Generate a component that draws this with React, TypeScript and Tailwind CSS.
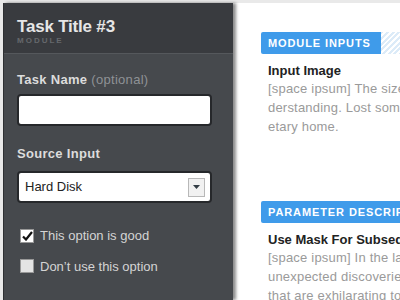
export default function App() {
  return (
    <div className="w-[400px] h-[300px] overflow-hidden bg-[#e9e9e9] pt-[3px] pl-[3px] flex font-['Liberation_Sans',Arial,sans-serif]">
      <div className="w-[230px] h-[297px] shrink-0 flex flex-col bg-[#46494d] border-l border-[#2e3033] shadow-[3px_0_3px_rgba(0,0,0,0.45)] z-10">
        <div className="h-[51px] bg-[#393b3f] border-b border-[#55585c] pl-[13px] pt-[14px]">
          <div className="text-[17px] leading-[20px] font-bold text-[#e6e6e6] tracking-[-0.2px]">Task Title #3</div>
          <div className="text-[8px] leading-[8px] font-bold tracking-[2px] text-[#65686c]">MODULE</div>
        </div>
        <div className="pl-[13px] pr-[21px] pt-[18px] flex flex-col">
          <div className="text-[13px] leading-[16px] font-bold text-[#dcdcdc] tracking-[0.3px]">
            Task Name <span className="font-normal text-[#8f9296]">(optional)</span>
          </div>
          <div className="mt-[6px] h-[32px] bg-white rounded-[4px] border-2 border-[#26282b]" />
          <div className="mt-[20px] text-[13px] leading-[16px] font-bold text-[#dcdcdc] tracking-[0.3px]">Source Input</div>
          <div className="mt-[9px] h-[32px] bg-white rounded-[4px] border-2 border-[#26282b] flex items-center justify-between pl-[6px] pr-[5px]">
            <span className="text-[13px] text-[#222]">Hard Disk</span>
            <div className="w-[17px] h-[19px] border border-[#b8b8b8] bg-[#f1f1f1] flex items-center justify-center">
              <svg width="7" height="4" viewBox="0 0 7 4">
                <path d="M0 0h7L3.5 4z" fill="#333d45" />
              </svg>
            </div>
          </div>
          <label className="mt-[23px] flex items-center gap-[6px] text-[13px] text-[#d4d4d4]">
            <span className="w-[14px] h-[14px] ml-[3px] bg-white border border-[#999] flex items-center justify-center">
              <svg width="11" height="10" viewBox="0 0 11 10">
                <path d="M1 5.5l3 3L10 1" stroke="#111" strokeWidth="2.2" fill="none" />
              </svg>
            </span>
            This option is good
          </label>
          <label className="mt-[11px] flex items-center gap-[6px] text-[13px] text-[#d4d4d4]">
            <span className="w-[14px] h-[14px] ml-[3px] bg-[#e4e4e4] border border-[#999]" />
            Don’t use this option
          </label>
        </div>
      </div>
      <div className="flex-1 bg-white pl-[28px] pt-[29px] overflow-hidden">
        <div className="flex h-[22px] w-[200px]">
          <div className="bg-[#3f9bea] rounded-l-[2px] pl-[7px] pr-[10px] flex items-center text-[11px] font-bold text-white tracking-[0.9px] whitespace-nowrap">MODULE INPUTS</div>
          <div className="flex-1 bg-[repeating-linear-gradient(135deg,#dcebf8_0px,#dcebf8_2px,#ffffff_2px,#ffffff_4px)]" />
        </div>
        <div className="pl-[7px] w-[300px]">
          <div className="mt-[9px] text-[13px] leading-[16px] font-bold text-[#222]">Input Image</div>
          <div className="text-[13px] leading-[19px] text-[#9a9a9a] tracking-[0.2px]">
            [space ipsum] The size<br />derstanding. Lost some<br />etary home.
          </div>
        </div>
        <div className="mt-[65px] flex h-[22px] w-[200px]">
          <div className="flex-1 bg-[#3f9bea] rounded-l-[2px] px-[7px] flex items-center text-[11px] font-bold text-white tracking-[0.9px] whitespace-nowrap">PARAMETER DESCRIPTION</div>
        </div>
        <div className="pl-[7px] w-[300px]">
          <div className="mt-[9px] text-[13px] leading-[16px] font-bold text-[#222] whitespace-nowrap">Use Mask For Subsequent Frames</div>
          <div className="text-[13px] leading-[19px] text-[#9a9a9a] tracking-[0.2px] whitespace-nowrap">
            [space ipsum] In the last<br />unexpected discoveries<br />that are exhilarating to
          </div>
        </div>
      </div>
    </div>
  )
}
